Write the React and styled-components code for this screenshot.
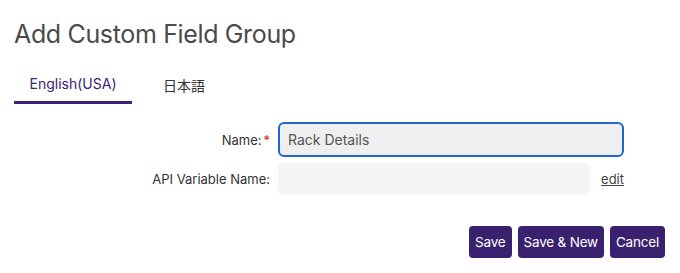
import React from 'react'
import styled, { createGlobalStyle } from 'styled-components'

const GlobalStyle = createGlobalStyle`
  body {
    margin: 0;
    background: #fff;
    font-family: Inter, "Noto Sans", "Noto Sans CJK JP", sans-serif;
  }
`

const Page = styled.div`
  width: 680px;
  height: 273px;
  padding: 18px 14px 0;
  box-sizing: border-box;
`

const Title = styled.h1`
  margin: 0;
  font-size: 25px;
  font-weight: 400;
  color: #4a4a4a;
  letter-spacing: -0.35px;
  line-height: 32px;
`

const Tabs = styled.div`
  display: flex;
  margin-top: 20px;
`

const Tab = styled.div`
  width: ${p => p.width}px;
  height: 34px;
  box-sizing: border-box;
  display: flex;
  justify-content: center;
  align-items: flex-start;
  padding-top: 5px;
  font-size: 14px;
  color: ${p => (p.active ? '#3b2275' : '#333')};
  border-bottom: 3px solid ${p => (p.active ? '#3b2275' : 'transparent')};
`

const Form = styled.div`
  display: grid;
  grid-template-columns: 264px 312px 34px;
  row-gap: 6px;
  margin-top: 18px;
  align-items: center;
`

const Label = styled.label`
  font-size: 13px;
  color: #333;
  text-align: right;
  padding-right: 8px;
`

const Star = styled.span`
  color: #e0201a;
  margin-left: 2px;
`

const NameInput = styled.div`
  grid-column: 2 / 4;
  height: 35px;
  box-sizing: border-box;
  border: 2px solid #1f66d1;
  border-radius: 6px;
  background: #efefef;
  display: flex;
  align-items: center;
  padding-left: 8px;
  font-size: 14px;
  color: #555;
`

const ApiInput = styled.div`
  height: 32px;
  background: #f5f5f5;
  border-radius: 5px;
`

const Edit = styled.a`
  justify-self: end;
  font-size: 13px;
  color: #444;
  text-decoration: underline;
`

const Actions = styled.div`
  display: flex;
  justify-content: flex-end;
  gap: 6px;
  margin-top: 31px;
  padding-right: 1px;
`

const Button = styled.button`
  height: 32px;
  padding: 0 6px;
  border: none;
  border-radius: 4px;
  background: #3a2170;
  color: #fff;
  font-family: inherit;
  font-size: 13.5px;
  letter-spacing: -0.2px;
`

export default function App() {
  return (
    <Page>
      <GlobalStyle />
      <Title>Add Custom Field Group</Title>
      <Tabs>
        <Tab active width={118}>English(USA)</Tab>
        <Tab width={104}>日本語</Tab>
      </Tabs>
      <Form>
        <Label>
          Name:<Star>*</Star>
        </Label>
        <NameInput>Rack Details</NameInput>
        <Label>API Variable Name:</Label>
        <ApiInput />
        <Edit>edit</Edit>
      </Form>
      <Actions>
        <Button>Save</Button>
        <Button>Save &amp; New</Button>
        <Button>Cancel</Button>
      </Actions>
    </Page>
  )
}
